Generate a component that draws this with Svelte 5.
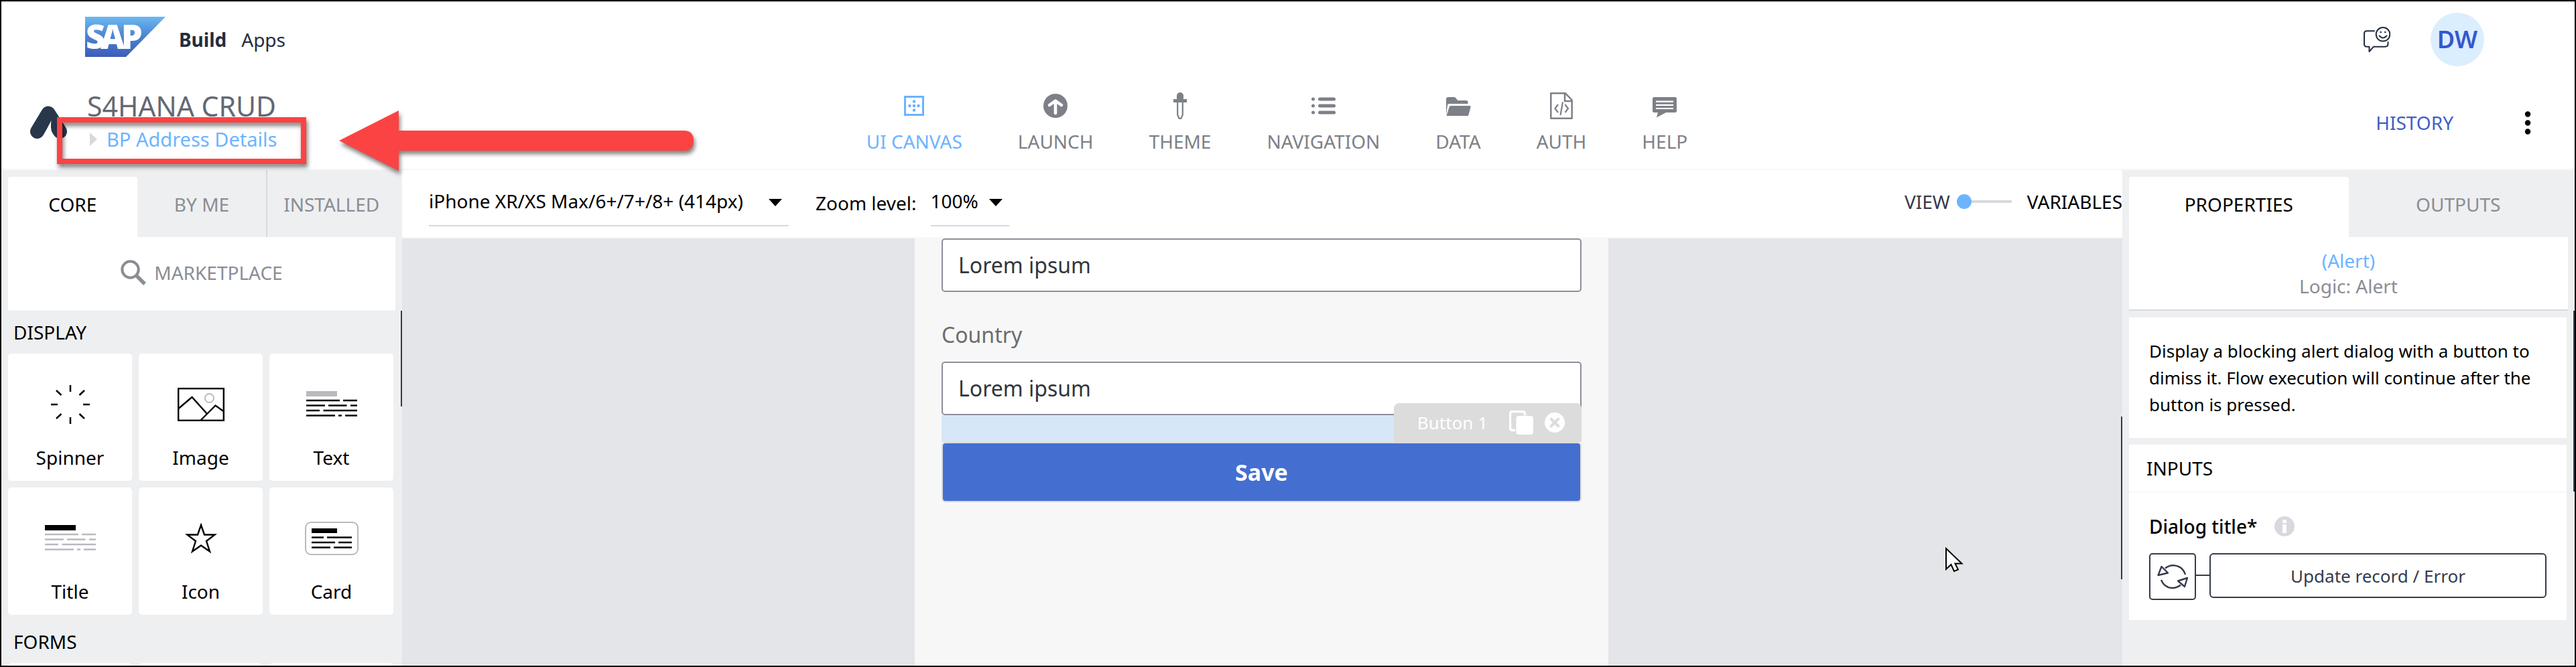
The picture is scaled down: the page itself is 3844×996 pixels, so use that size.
<script>
  const nav = ['UI CANVAS', 'LAUNCH', 'THEME', 'NAVIGATION', 'DATA', 'AUTH', 'HELP'];
  const parts = ['Spinner', 'Image', 'Text', 'Title', 'Icon', 'Card'];
  const fields = [
    { id: 'region', label: '' },
    { id: 'country', label: 'Country' }
  ];
  let device = $state('iPhone XR/XS Max/6+/7+/8+ (414px)');
  let zoom = $state('100%');
  let mode = $state(0);
</script>

{#snippet caret()}
  <svg class="caret" width="20" height="11" viewBox="0 0 20 11" aria-hidden="true"><path d="M0 0H20L10 11Z" /></svg>
{/snippet}

{#snippet textLines(bar, line)}
  <svg width="76" height="40" viewBox="0 0 76 40" fill="none" stroke={line} stroke-width="2.4" aria-hidden="true">
    <rect x="0" y="0" width="46" height="8" fill={bar} stroke="none" />
    <path d="M0 14H50M55 14H76M0 21.500H28M33 21.500H60.500M66 21.500H76M0 29H20M25.500 29H76M0 36.500H43M48 36.500H53M58 36.500H76" />
  </svg>
{/snippet}

<div class="app">
  <header class="top">
    <svg class="sap" width="120" height="60" viewBox="0 0 120 60" role="img" aria-label="SAP">
      <defs>
        <linearGradient id="sapfill" x1="0" y1="0" x2="0" y2="1">
          <stop offset="0" stop-color="#6cb9f2" />
          <stop offset="0.5" stop-color="#4a82d0" />
          <stop offset="1" stop-color="#3d5cb8" />
        </linearGradient>
      </defs>
      <path d="M0 0H120L61 60H0Z" fill="url(#sapfill)" />
      <text x="1 23 54" y="48" class="saptext">SAP</text>
    </svg>
    <div class="brand"><b>Build</b><span>Apps</span></div>
    <div class="account">
      <button class="plain" aria-label="Feedback">
        <svg width="40" height="38" viewBox="0 0 40 38" fill="none" stroke="#232d3f" stroke-width="2" stroke-linecap="round" stroke-linejoin="round">
          <path d="M16 6.300H5Q1 6.300 1 10V26Q1 29.700 5 29.700H8.500V37L15 29.700H32Q36.500 29.700 36.500 25.500V23" />
          <circle cx="29" cy="11.300" r="10.300" />
          <path d="M23.500 13.500Q29 19.500 34.500 13.500" />
          <circle cx="25.700" cy="8" r="1.300" fill="#232d3f" stroke="none" />
          <circle cx="32.300" cy="8" r="1.300" fill="#232d3f" stroke="none" />
        </svg>
      </button>
      <button class="avatar">DW</button>
    </div>
  </header>

  <header class="bar">
    <div class="project">
      <svg width="56" height="50" viewBox="0 0 56 50" aria-hidden="true">
        <path d="M10.500 38.500L27 11L44.500 38.500" fill="none" stroke="#29374b" stroke-width="21" stroke-linecap="round" stroke-linejoin="round" />
        <path d="M31.500 22Q30 32 32.500 40Q34.500 45.500 40 49H16Q19 46 21 42Z" fill="#fff" />
      </svg>
      <div class="titles">
        <h1>S4HANA CRUD</h1>
        <a class="crumb" href="#page">
          <svg width="11" height="20" viewBox="0 0 11 20" aria-hidden="true"><path d="M0 0L11 10L0 20Z" fill="#d8d9de" /></svg>
          BP Address Details
        </a>
      </div>
    </div>
    <nav>
      {#each nav as name, i}
        <a href="#nav" class:active={i === 0}>
          <svg width="40" height="40" viewBox="0 0 40 40" fill="currentColor" aria-hidden="true">
            {#if i === 0}
              <rect x="6.500" y="6.500" width="27" height="27" fill="none" stroke="currentColor" stroke-width="3" />
              <path d="M18 18h4v4h-4zM11.500 18h4v4h-4zM24.500 18h4v4h-4zM18 11.500h4v4h-4zM18 24.500h4v4h-4z" />
            {:else if i === 1}
              <circle cx="20" cy="20" r="18" />
              <path d="M20 13V31M11 19L20 12.500L29 19" fill="none" stroke="#fff" stroke-width="4.600" stroke-linecap="round" stroke-linejoin="round" />
            {:else if i === 2}
              <rect x="15" y="0" width="10" height="14" rx="5" />
              <rect x="10" y="10" width="20" height="5" />
              <path d="M16.200 14V33.500L18.700 39H21.300L23.800 33.500V14" fill="none" stroke="currentColor" stroke-width="2.200" />
            {:else if i === 3}
              <circle cx="4.500" cy="10" r="2.500" /><circle cx="4.500" cy="20" r="2.500" /><circle cx="4.500" cy="30" r="2.500" />
              <rect x="12" y="7.500" width="26" height="5" rx="2.500" /><rect x="12" y="17.500" width="26" height="5" rx="2.500" /><rect x="12" y="27.500" width="26" height="5" rx="2.500" />
            {:else if i === 4}
              <path d="M2 34V10Q2 7 5 7H14Q15 7 16 8L19.500 12H32Q34.500 12 34.500 14.500V17H6Q4.500 17 4 19Z" />
              <path d="M9 20H37Q39 20 38.500 22L35.500 33.500Q35 35 33.500 35H2.500L6.500 22Q7 20 9 20Z" />
            {:else if i === 5}
              <path d="M5 1.300H26L35.700 11.500V38.700H4.300V1.300ZM25 2V13H35" fill="none" stroke="currentColor" stroke-width="2.500" stroke-linejoin="round" />
              <path d="M15 18L10.500 24L15 30M25.500 18L30 24L25.500 30M22 14.500L18.500 34" fill="none" stroke="currentColor" stroke-width="2.200" />
            {:else}
              <path fill-rule="evenodd" d="M4.500 7H35.500Q38 7 38 9.500V27.500Q38 30 35.500 30H22L8 37.500L10 30H4.500Q2 30 2 27.500V9.500Q2 7 4.500 7ZM7 12.500V14.700H33V12.500ZM7 17.700V19.900H33V17.700ZM7 22.900V25.100H33V22.900Z" />
            {/if}
          </svg>
          {name}
        </a>
      {/each}
    </nav>
    <div class="actions">
      <button class="plain history">HISTORY</button>
      <button class="plain" aria-label="More">
        <svg width="40" height="40" viewBox="0 0 40 40"><circle cx="20" cy="7.500" r="4.200" /><circle cx="20" cy="20.500" r="4.200" /><circle cx="20" cy="33.500" r="4.200" /></svg>
      </button>
    </div>
  </header>

  <div class="work">
    <aside class="library">
      <div class="tabs three">
        <button class="tab on">CORE</button>
        <button class="tab">BY ME</button>
        <button class="tab split">INSTALLED</button>
      </div>
      <button class="market">
        <svg width="38" height="38" viewBox="0 0 38 38" fill="none" stroke="#8b8d94" aria-hidden="true">
          <circle cx="14.500" cy="14.500" r="12.200" stroke-width="4" /><path d="M23.500 23.500L36 36" stroke-width="5.500" />
        </svg>
        MARKETPLACE
      </button>
      <div class="scroll">
        <h2>DISPLAY</h2>
        <div class="cards">
          {#each parts as name}
            <button class="part">
              <span class="pic">
                {#if name === 'Spinner'}
                  <svg width="58" height="58" viewBox="0 0 58 58" fill="none" stroke="#000" stroke-width="2.500">
                    <path d="M29 0V10M29 48V58M0 29H10M48 29H58M8 8L15.500 15M50 8L42.500 15M8 50L15.500 43M50 50L42.500 43" />
                  </svg>
                {:else if name === 'Image'}
                  <svg width="70" height="50" viewBox="0 0 70 50" fill="none" stroke="#000" stroke-width="2.400">
                    <rect x="1.200" y="1.200" width="67.600" height="47.600" />
                    <path d="M1.500 31L21.500 14L44 39M34 49L56.500 26.500L69 35.500" />
                    <circle cx="47.500" cy="15.500" r="6.500" stroke="#b9bac0" stroke-width="2" />
                  </svg>
                {:else if name === 'Text'}
                  {@render textLines('#b9bac0', '#000')}
                {:else if name === 'Title'}
                  {@render textLines('#000', '#b9bac0')}
                {:else if name === 'Icon'}
                  <svg width="48" height="46" viewBox="0 0 48 46" fill="none" stroke="#000" stroke-width="2.400">
                    <path d="M24 3L29 17.500H44.500L32 27L37 42.500L24 33.500L11 42.500L16 27L3.500 17.500H19Z" />
                  </svg>
                {:else}
                  <svg width="80" height="50" viewBox="0 0 80 50" fill="none" stroke="#000" stroke-width="2.400">
                    <rect x="1" y="1" width="78" height="48" rx="8" stroke="#b9bac0" stroke-width="2" />
                    <rect x="10" y="10" width="38" height="7" fill="#000" stroke="none" />
                    <path d="M10 23.500H28M33 23.500H70M10 31H45M50 31H70M10 38.500H38M43 38.500H70" />
                  </svg>
                {/if}
              </span>
              {name}
            </button>
          {/each}
        </div>
        <h2 class="next">FORMS</h2>
        <div class="cards"><div class="part"></div><div class="part"></div><div class="part"></div></div>
      </div>
      <i class="thumb"></i>
    </aside>

    <main>
      <div class="tools">
        <div class="pick device">
          <select aria-label="Device" bind:value={device}><option>iPhone XR/XS Max/6+/7+/8+ (414px)</option></select>
          {@render caret()}
        </div>
        <label class="zoomlabel" for="zoom">Zoom level:</label>
        <div class="pick zoom">
          <select id="zoom" bind:value={zoom}><option>100%</option></select>
          {@render caret()}
        </div>
        <div class="mode">
          <label for="mode">VIEW</label>
          <input id="mode" type="range" min="0" max="1" bind:value={mode} />
          <span>VARIABLES</span>
        </div>
      </div>
      <div class="canvas">
        <div class="phone">
          {#each fields as f}
            {#if f.label}<label class="flabel" for={f.id}>{f.label}</label>{/if}
            <input id={f.id} class="field" type="text" value="Lorem ipsum" aria-label={f.label ? undefined : 'Text field'} />
          {/each}
          <div class="space">
            <div class="tag">
              <span>Button 1</span>
              <button class="plain" aria-label="Duplicate">
                <svg width="36" height="36" viewBox="0 0 36 36"><rect x="1.500" y="1.500" width="22" height="28" rx="3" fill="none" stroke="#fff" stroke-width="3.500" /><rect x="9" y="7" width="27" height="29" rx="4" fill="#dcdcdc" /><rect x="10.500" y="8" width="25.500" height="28" rx="4" fill="#fff" /></svg>
              </button>
              <button class="plain" aria-label="Remove">
                <svg width="30" height="30" viewBox="0 0 30 30"><circle cx="15" cy="15" r="15" fill="#fff" /><path d="M8.500 8.500L21.500 21.500M21.500 8.500L8.500 21.500" stroke="#dcdcdc" stroke-width="4" /></svg>
              </button>
            </div>
          </div>
          <button class="save">Save</button>
        </div>
        <i class="thumb"></i>
      </div>
    </main>

    <aside class="inspector">
      <div class="tabs two">
        <button class="tab on">PROPERTIES</button>
        <button class="tab">OUTPUTS</button>
      </div>
      <div class="subject"><span class="blue">(Alert)</span><span>Logic: Alert</span></div>
      <p class="about">Display a blocking alert dialog with a button to dimiss it. Flow execution will continue after the button is pressed.</p>
      <section class="inputs">
        <h2>INPUTS</h2>
        <div class="prop">
          <div class="pname">
            <label for="bind">Dialog title*</label>
            <svg width="30" height="30" viewBox="0 0 30 30" aria-hidden="true"><circle cx="15" cy="15" r="15" fill="#d8d9de" /><path d="M12 5.500h6v4.500h-6zM12 12h6v13h-6z" fill="#fff" /></svg>
          </div>
          <div class="bindrow">
            <button class="kind" aria-label="Binding type">
              <svg width="66" height="66" viewBox="2 2 66 66" fill="none" stroke="#353b4b" stroke-width="2.400" stroke-linejoin="round">
                <path d="M24 22.500Q30 18 36 18.200Q50 19 54 32M18 40Q22 50.500 33 52Q41 52.500 47 47.500" />
                <path d="M18.500 20L13.500 33L28 29.500ZM57 37L43 41.500L53 50Z" />
              </svg>
            </button>
            <i class="wire"></i>
            <button class="bind" id="bind">Update record / Error</button>
          </div>
        </div>
      </section>
      <i class="thumb"></i>
    </aside>
  </div>

  <div class="frame"></div>
  <svg class="arrow" width="530" height="92" viewBox="0 0 530 92" aria-hidden="true">
    <path d="M0 46L89 1V31H516Q529 32 529 46Q529 60 516 61H89V91Z" fill="#fc4343" />
  </svg>
  <svg class="cursor" width="27" height="38" viewBox="0 0 27 38" aria-hidden="true">
    <path d="M1 2V33L8.500 26L13 36L19 33.500L14.500 24.500H24.500Z" fill="#fff" stroke="#000" stroke-width="2" />
  </svg>
</div>

<style>
  :global(body) { background: #fff; }
  .app, .app :global(*) { box-sizing: border-box; }
  .app {
    position: relative;
    display: flex;
    flex-direction: column;
    height: 100vh;
    border: 2px solid #000;
    overflow: hidden;
    font: 28px/36px "Noto Sans", "Open Sans", sans-serif;
    color: #000;
    background: #fff;
  }
  svg { display: block; flex: none; }
  button, input, select { font: inherit; color: inherit; border: 0; padding: 0; margin: 0; background: none; }
  a { color: inherit; text-decoration: none; }
  h1, h2, p { margin: 0; font-weight: 400; }
  .plain { display: block; }

  .top { display: flex; align-items: center; height: 112px; flex: none; padding: 0 135px 0 125px; border-top: 2px solid #dfdfdd; }
  .sap { margin-bottom: 8px; overflow: visible; }
  .saptext { font: 800 50px "Open Sans", sans-serif; fill: #fff; }
  .brand { display: flex; gap: 22px; margin-left: 20px; color: #232d3f; }
  .account { display: flex; align-items: center; gap: 60px; margin-left: auto; }
  .avatar { width: 80px; height: 80px; border-radius: 50%; background: #dbeefe; color: #3558cf; font-size: 36px; font-weight: 600; }

  .bar { display: flex; align-items: center; height: 140px; flex: none; border-bottom: 2px solid #f7f7f8; }
  .project, .actions { flex: 1; display: flex; align-items: center; }
  .project { padding-left: 43px; }
  .titles { display: flex; flex-direction: column; gap: 2px; margin-left: 29px; line-height: 48px; }
  h1 { font-size: 41px; color: #646872; }
  .crumb { display: flex; align-items: center; gap: 14px; padding-left: 4px; color: #6cb4ff; font-size: 29px; }
  nav { display: flex; gap: 83px; margin-right: 26px; }
  nav a { display: flex; flex-direction: column; align-items: center; gap: 15px; color: #7e8087; }
  nav .active { color: #6cb4ff; }
  .actions { justify-content: flex-end; gap: 91px; padding-right: 50px; }
  .history { color: #3c60c8; }

  .work { flex: 1; display: flex; min-height: 0; }
  aside { position: relative; flex: none; overflow: hidden; background: #eeeff1; padding: 0 10px; }
  .library { width: 598px; }
  .inspector { width: 675px; }
  .thumb { position: absolute; right: 0; width: 2px; background: #353b4b; }
  .library .thumb { top: 210px; height: 143px; }
  .inspector .thumb { top: 210px; height: 270px; }
  .canvas .thumb { top: 266px; height: 243px; }
  .tabs { display: grid; height: 100px; }
  .three { grid-template-columns: repeat(3, 1fr); }
  .two { grid-template-columns: repeat(2, 1fr); }
  .tab { padding-top: 2px; color: #8b8d94; }
  .tab.on { margin-top: 10px; padding: 0 0 8px; border-radius: 4px 4px 0 0; background: #fff; color: #000; }
  .split { border-left: 2px solid #d8d9de; }
  .market { display: flex; align-items: center; justify-content: center; gap: 12px; width: 100%; height: 110px; padding-bottom: 3px; background: #fff; color: #8b8d94; border-bottom: 1px solid #f7f7f8; }
  .scroll { padding-right: 3px; }
  .scroll h2 { line-height: 64px; padding-left: 8px; font-size: 28px; }
  .scroll .next { margin-top: 8px; }
  .cards { display: grid; grid-template-columns: repeat(3, 1fr); gap: 10px; }
  .part { display: flex; flex-direction: column; align-items: center; height: 190px; padding-top: 36px; gap: 19px; border-radius: 5px; background: #fff; line-height: 40px; }
  .pic { display: flex; align-items: center; justify-content: center; height: 80px; }

  main { flex: 1; min-width: 0; display: flex; flex-direction: column; }
  .tools { display: flex; align-items: flex-start; flex: none; height: 102px; padding: 10px 0 0 40px; border-bottom: 2px solid #f7f7f8; }
  .pick { position: relative; height: 74px; border-bottom: 2px solid #d8d9de; }
  .pick select { appearance: none; width: 100%; height: 72px; outline: 0; }
  .caret { position: absolute; right: 10px; top: 33px; pointer-events: none; }
  .device { width: 537px; }
  .zoom { width: 117px; }
  .zoomlabel { line-height: 78px; margin: 0 21px 0 40px; }
  .mode { display: flex; align-items: center; height: 74px; margin-left: auto; }
  .mode label { color: #353b4b; }
  .mode input { appearance: none; width: 82px; height: 22px; margin: 0 23px 0 10px; background: linear-gradient(#d8d9de, #d8d9de) center / 100% 4px no-repeat; }
  .mode input::-webkit-slider-thumb { appearance: none; width: 22px; height: 22px; border-radius: 50%; background: #6cb4ff; }
  .canvas { position: relative; flex: 1; min-height: 0; display: flex; justify-content: center; padding-right: 2px; background: #e4e5e9; overflow: hidden; }
  .phone { display: flex; flex-direction: column; width: 1035px; padding: 0 40px; background: #f7f7f7; }
  .field { flex: none; width: 100%; height: 80px; padding: 0 23px 2px; border: 2px solid #8c9099; border-radius: 5px; background: #fff; color: #32363a; font-size: 32px; }
  .flabel { margin: 44px 0 20px; line-height: 40px; font-size: 32px; color: #6a6d70; }
  .space { position: relative; height: 40px; flex: none; background: #d6e7f7; }
  .tag { position: absolute; right: 0; bottom: 0; display: flex; align-items: center; height: 58px; padding: 0 25px 0 35px; border-radius: 8px 8px 0 0; background: #dcdcdc; color: #fff; font-size: 26px; }
  .tag span { margin-right: 32px; }
  .tag .plain + .plain { margin-left: 17px; }
  .save { flex: none; height: 90px; border: 2px solid #dcdcdc; border-radius: 6px; background: #446fd0; color: #fff; font-size: 34px; font-weight: 700; }

  .subject { display: flex; flex-direction: column; align-items: center; justify-content: center; height: 110px; border-bottom: 2px solid #d8d9de; background: #fff; color: #8b8d94; line-height: 38px; }
  .blue { color: #6cb4ff; }
  .about { margin: 10px 2px 10px 0; padding: 30px; background: #fff; font-size: 26px; line-height: 40px; }
  .inputs { margin-right: 2px; background: #fff; }
  .inputs h2 { padding-left: 26px; font-size: 28px; line-height: 70px; border-bottom: 2px solid #f7f7f8; }
  .prop { padding: 30px; }
  .pname { display: flex; align-items: center; gap: 26px; line-height: 40px; font-weight: 500; }
  .bindrow { display: flex; align-items: flex-start; margin-top: 20px; color: #353b4b; }
  .kind { width: 70px; height: 70px; border: 2px solid #353b4b; border-radius: 5px; }
  .wire { width: 20px; height: 2px; margin-top: 32px; background: #353b4b; }
  .bind { flex: 1; height: 67px; border: 2px solid #353b4b; border-radius: 6px; font-size: 26px; }

  .frame { position: absolute; left: 83px; top: 173px; width: 372px; height: 70px; border: 8px solid #fc4343; filter: drop-shadow(2px 5px 3px rgba(0, 0, 0, 0.5)); }
  .arrow { position: absolute; left: 504px; top: 162px; overflow: visible; filter: drop-shadow(2px 5px 3px rgba(0, 0, 0, 0.5)); }
  .cursor { position: absolute; left: 2901px; top: 815px; }
</style>
